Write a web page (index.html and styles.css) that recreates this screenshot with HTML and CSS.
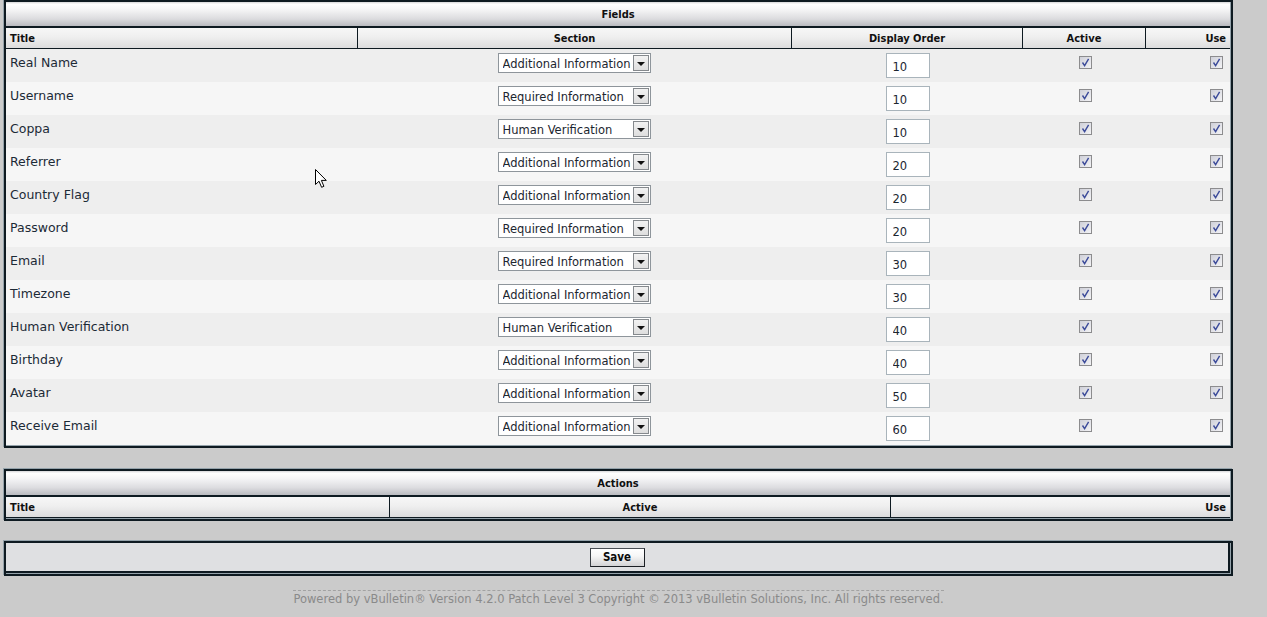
FILE: index.html
```html
<!DOCTYPE html>
<html lang="en">
<head>
<meta charset="utf-8">
<title>Fields</title>
<link rel="stylesheet" href="styles.css">
</head>
<body>
<div class="page">
  <div class="tborder">
    <table class="grid fields">
      <colgroup><col class="f-title"><col class="f-section"><col class="f-order"><col class="f-active"><col class="f-use"></colgroup>
      <thead>
        <tr><th colspan="5" class="tcat">Fields</th></tr>
        <tr class="thead"><th class="left">Title</th><th>Section</th><th>Display Order</th><th>Active</th><th class="right last">Use</th></tr>
      </thead>
      <tbody>
        <tr class="alt1"><td class="name">Real Name</td><td><div class="sel"><select><option>Additional Information</option><option>Required Information</option><option>Human Verification</option></select><span class="arrow"></span></div></td><td class="ord"><input class="order" value="10"></td><td class="act"><span class="cb"><svg viewBox="0 0 11 11"><path d="M2.5 5.5 L4.6 8.6 L8.6 1.8"/></svg></span></td><td><span class="cb end"><svg viewBox="0 0 11 11"><path d="M2.5 5.5 L4.6 8.6 L8.6 1.8"/></svg></span></td></tr>
        <tr class="alt2"><td class="name">Username</td><td><div class="sel"><select><option>Required Information</option><option>Additional Information</option><option>Human Verification</option></select><span class="arrow"></span></div></td><td class="ord"><input class="order" value="10"></td><td class="act"><span class="cb"><svg viewBox="0 0 11 11"><path d="M2.5 5.5 L4.6 8.6 L8.6 1.8"/></svg></span></td><td><span class="cb end"><svg viewBox="0 0 11 11"><path d="M2.5 5.5 L4.6 8.6 L8.6 1.8"/></svg></span></td></tr>
        <tr class="alt1"><td class="name">Coppa</td><td><div class="sel"><select><option>Human Verification</option><option>Additional Information</option><option>Required Information</option></select><span class="arrow"></span></div></td><td class="ord"><input class="order" value="10"></td><td class="act"><span class="cb"><svg viewBox="0 0 11 11"><path d="M2.5 5.5 L4.6 8.6 L8.6 1.8"/></svg></span></td><td><span class="cb end"><svg viewBox="0 0 11 11"><path d="M2.5 5.5 L4.6 8.6 L8.6 1.8"/></svg></span></td></tr>
        <tr class="alt2"><td class="name">Referrer</td><td><div class="sel"><select><option>Additional Information</option><option>Required Information</option><option>Human Verification</option></select><span class="arrow"></span></div></td><td class="ord"><input class="order" value="20"></td><td class="act"><span class="cb"><svg viewBox="0 0 11 11"><path d="M2.5 5.5 L4.6 8.6 L8.6 1.8"/></svg></span></td><td><span class="cb end"><svg viewBox="0 0 11 11"><path d="M2.5 5.5 L4.6 8.6 L8.6 1.8"/></svg></span></td></tr>
        <tr class="alt1"><td class="name">Country Flag</td><td><div class="sel"><select><option>Additional Information</option><option>Required Information</option><option>Human Verification</option></select><span class="arrow"></span></div></td><td class="ord"><input class="order" value="20"></td><td class="act"><span class="cb"><svg viewBox="0 0 11 11"><path d="M2.5 5.5 L4.6 8.6 L8.6 1.8"/></svg></span></td><td><span class="cb end"><svg viewBox="0 0 11 11"><path d="M2.5 5.5 L4.6 8.6 L8.6 1.8"/></svg></span></td></tr>
        <tr class="alt2"><td class="name">Password</td><td><div class="sel"><select><option>Required Information</option><option>Additional Information</option><option>Human Verification</option></select><span class="arrow"></span></div></td><td class="ord"><input class="order" value="20"></td><td class="act"><span class="cb"><svg viewBox="0 0 11 11"><path d="M2.5 5.5 L4.6 8.6 L8.6 1.8"/></svg></span></td><td><span class="cb end"><svg viewBox="0 0 11 11"><path d="M2.5 5.5 L4.6 8.6 L8.6 1.8"/></svg></span></td></tr>
        <tr class="alt1"><td class="name">Email</td><td><div class="sel"><select><option>Required Information</option><option>Additional Information</option><option>Human Verification</option></select><span class="arrow"></span></div></td><td class="ord"><input class="order" value="30"></td><td class="act"><span class="cb"><svg viewBox="0 0 11 11"><path d="M2.5 5.5 L4.6 8.6 L8.6 1.8"/></svg></span></td><td><span class="cb end"><svg viewBox="0 0 11 11"><path d="M2.5 5.5 L4.6 8.6 L8.6 1.8"/></svg></span></td></tr>
        <tr class="alt2"><td class="name">Timezone</td><td><div class="sel"><select><option>Additional Information</option><option>Required Information</option><option>Human Verification</option></select><span class="arrow"></span></div></td><td class="ord"><input class="order" value="30"></td><td class="act"><span class="cb"><svg viewBox="0 0 11 11"><path d="M2.5 5.5 L4.6 8.6 L8.6 1.8"/></svg></span></td><td><span class="cb end"><svg viewBox="0 0 11 11"><path d="M2.5 5.5 L4.6 8.6 L8.6 1.8"/></svg></span></td></tr>
        <tr class="alt1"><td class="name">Human Verification</td><td><div class="sel"><select><option>Human Verification</option><option>Additional Information</option><option>Required Information</option></select><span class="arrow"></span></div></td><td class="ord"><input class="order" value="40"></td><td class="act"><span class="cb"><svg viewBox="0 0 11 11"><path d="M2.5 5.5 L4.6 8.6 L8.6 1.8"/></svg></span></td><td><span class="cb end"><svg viewBox="0 0 11 11"><path d="M2.5 5.5 L4.6 8.6 L8.6 1.8"/></svg></span></td></tr>
        <tr class="alt2"><td class="name">Birthday</td><td><div class="sel"><select><option>Additional Information</option><option>Required Information</option><option>Human Verification</option></select><span class="arrow"></span></div></td><td class="ord"><input class="order" value="40"></td><td class="act"><span class="cb"><svg viewBox="0 0 11 11"><path d="M2.5 5.5 L4.6 8.6 L8.6 1.8"/></svg></span></td><td><span class="cb end"><svg viewBox="0 0 11 11"><path d="M2.5 5.5 L4.6 8.6 L8.6 1.8"/></svg></span></td></tr>
        <tr class="alt1"><td class="name">Avatar</td><td><div class="sel"><select><option>Additional Information</option><option>Required Information</option><option>Human Verification</option></select><span class="arrow"></span></div></td><td class="ord"><input class="order" value="50"></td><td class="act"><span class="cb"><svg viewBox="0 0 11 11"><path d="M2.5 5.5 L4.6 8.6 L8.6 1.8"/></svg></span></td><td><span class="cb end"><svg viewBox="0 0 11 11"><path d="M2.5 5.5 L4.6 8.6 L8.6 1.8"/></svg></span></td></tr>
        <tr class="alt2"><td class="name">Receive Email</td><td><div class="sel"><select><option>Additional Information</option><option>Required Information</option><option>Human Verification</option></select><span class="arrow"></span></div></td><td class="ord"><input class="order" value="60"></td><td class="act"><span class="cb"><svg viewBox="0 0 11 11"><path d="M2.5 5.5 L4.6 8.6 L8.6 1.8"/></svg></span></td><td><span class="cb end"><svg viewBox="0 0 11 11"><path d="M2.5 5.5 L4.6 8.6 L8.6 1.8"/></svg></span></td></tr>
      </tbody>
    </table>
  </div>

  <div class="tborder gap">
    <table class="grid actions">
      <colgroup><col class="a-title"><col class="a-active"><col class="a-use"></colgroup>
      <thead>
        <tr><th colspan="3" class="tcat">Actions</th></tr>
        <tr class="thead"><th class="left">Title</th><th>Active</th><th class="right last">Use</th></tr>
      </thead>
    </table>
  </div>

  <div class="tborder gap2">
    <table class="grid">
      <tbody>
        <tr><td class="submitrow"><button class="button" type="button">Save</button></td></tr>
      </tbody>
    </table>
  </div>

  <div class="footer"><span class="copyright">Powered by vBulletin® Version 4.2.0 Patch Level 3 Copyright © 2013 vBulletin Solutions, Inc. All rights reserved.</span></div>

  <svg class="cursor" width="13" height="20" viewBox="0 0 13 20"><path d="M0.5 0.5 L0.5 15.5 L4 12.2 L6.6 18.3 L8.9 17.3 L6.4 11.4 L11.3 11.4 Z"/></svg>
</div>
</body>
</html>
```

FILE: styles.css
```css
html, body {
  margin: 0;
  padding: 0;
}
body {
  background: #cbcbcb;
  font-family: "DejaVu Sans", Verdana, sans-serif;
  color: #1c2630;
}
.page {
  position: relative;
  padding: 0 0 0 4px;
}
.tborder {
  width: 1229px;
  box-sizing: border-box;
  border: 2px solid #0e1a21;
  padding: 0 1px 1px 0;
  background: #94a2aa;
  box-shadow: -1px -1px 0 #94a2aa;
}
.gap { margin-top: 21px; }
.gap2 { margin-top: 20px; }

.grid {
  width: 100%;
  border-collapse: separate;
  border-spacing: 0;
  table-layout: fixed;
}
.f-title { width: 351px; }
.f-section { width: 434px; }
.f-order { width: 231px; }
.f-active { width: 123px; }
.f-use { width: 85px; }
.a-title { width: 383px; }
.a-active { width: 501px; }
.a-use { width: 340px; }

.tcat {
  font-family: "DejaVu Sans Condensed", "DejaVu Sans", sans-serif;
  font-stretch: condensed;
  font-weight: bold;
  font-size: 11px;
  color: #101010;
  line-height: 23px;
  padding: 1px 0 0;
  text-align: center;
  border-bottom: 2px solid #0e1a21;
  background: linear-gradient(to bottom, #d6d6d8 0, #ffffff 9%, #f6f6f7 30%, #dcdcdf 70%, #babbc0 100%);
}
.thead th {
  font-family: "DejaVu Sans Condensed", "DejaVu Sans", sans-serif;
  font-stretch: condensed;
  font-weight: bold;
  font-size: 11px;
  color: #101010;
  line-height: 19px;
  padding: 1px 4px 0;
  text-align: center;
  border-bottom: 1px solid #0e1a21;
  border-left: 1px solid #0e1a21;
  background: linear-gradient(to bottom, #f7f7f7 0, #efefef 45%, #dcdcdd 100%);
}
.thead th.left { text-align: left; border-left: 0; }
.thead th.right { text-align: right; }

tbody td {
  padding: 4px;
  vertical-align: top;
}
tbody td.ord { padding: 4px 3px 4px 5px; }
tbody td.act { padding: 4px 2px 4px 6px; }
.alt1 td { background: #eeeeee; }
.alt2 td { background: #f6f6f6; }

td.name {
  font-size: 12.5px;
  line-height: 16px;
  padding-top: 6px;
  color: #1c2a36;
}

.sel {
  display: flex;
  align-items: center;
  width: 153px;
  height: 20px;
  box-sizing: border-box;
  margin: 0 auto;
  border: 1px solid #8e959b;
  background: #ffffff;
}
.sel select {
  appearance: none;
  -webkit-appearance: none;
  flex: 1;
  min-width: 0;
  height: 18px;
  border: 0;
  margin: 0;
  padding: 1px 0 0 4px;
  background: transparent;
  font-family: "DejaVu Sans", Verdana, sans-serif;
  font-size: 11.5px;
  color: #1c2630;
  outline: none;
}
.arrow {
  width: 16px;
  height: 16px;
  box-sizing: border-box;
  margin-right: 1px;
  border: 1px solid #85898d;
  background: linear-gradient(to bottom, #f2f2f2, #dedede);
  display: flex;
  align-items: center;
  justify-content: center;
}
.arrow::after {
  content: "";
  display: block;
  width: 0;
  height: 0;
  margin-top: 1px;
  border-left: 4px solid transparent;
  border-right: 4px solid transparent;
  border-top: 4px solid #111111;
}

.order {
  display: block;
  margin: 0 auto;
  width: 44px;
  height: 25px;
  box-sizing: border-box;
  border: 1px solid #a9b4bb;
  padding: 2px 0 0 6px;
  font-family: "DejaVu Sans", Verdana, sans-serif;
  font-size: 11.5px;
  color: #1c2630;
  background: #ffffff;
  outline: none;
}

.cb {
  display: block;
  width: 13px;
  height: 13px;
  box-sizing: border-box;
  margin: 3px auto 0;
  border: 1px solid #8c8c8e;
  background: linear-gradient(to bottom right, #cfd0d9, #f3f3f5);
}
.cb.end {
  margin: 3px 3px 0 auto;
}
.cb svg {
  display: block;
  width: 11px;
  height: 11px;
}
.cb path {
  fill: none;
  stroke: #3c4b9a;
  stroke-width: 1.4;
}

.submitrow {
  padding: 5px 0 4px;
  background: #dfe0e2;
  border-bottom: 2px solid #0e1a21;
  border-right: 2px solid #0e1a21;
  text-align: center;
}
.button {
  display: block;
  margin: 0 auto;
  width: 55px;
  height: 19px;
  box-sizing: border-box;
  padding: 0;
  border: 1px solid #1b1f24;
  border-top-color: #4a4f55;
  border-left-color: #3a3f45;
  background: linear-gradient(to bottom, #ffffff 0, #f7f7f7 40%, #d2d2d4 100%);
  font-family: "DejaVu Sans Condensed", "DejaVu Sans", sans-serif;
  font-stretch: condensed;
  font-weight: bold;
  font-size: 11.5px;
  color: #0c0c0c;
  line-height: 17px;
}

.footer {
  width: 1229px;
  text-align: center;
  margin-top: 12px;
}
.copyright {
  display: inline-block;
  border-top: 1px dashed #a2a2a2;
  padding-top: 1px;
  font-size: 11.5px;
  line-height: 14px;
  color: #8a8a8a;
}

.cursor {
  position: absolute;
  left: 315px;
  top: 169px;
}
.cursor path {
  fill: #ffffff;
  stroke: #000000;
  stroke-width: 1;
  stroke-linejoin: miter;
}
```
